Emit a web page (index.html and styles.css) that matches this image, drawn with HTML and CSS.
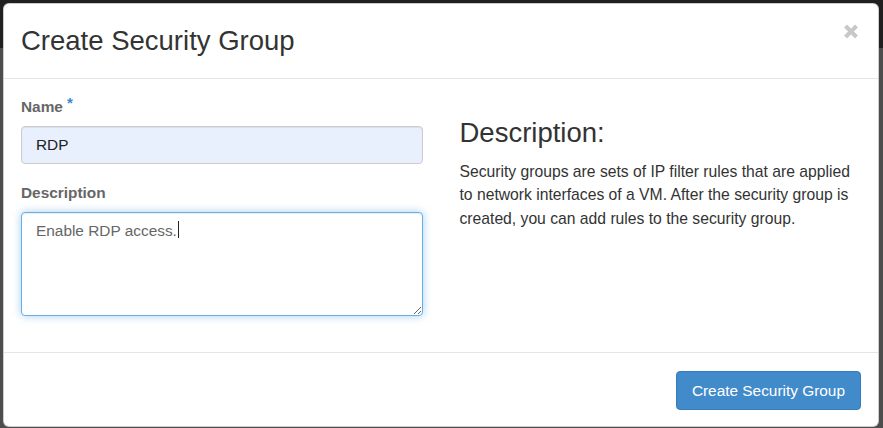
FILE: index.html
```html
<!DOCTYPE html>
<html lang="en">
<head>
<meta charset="utf-8">
<title>Create Security Group</title>
<link rel="stylesheet" href="styles.css">
</head>
<body>
<div class="modal">
  <div class="modal-header">
    <h3 class="modal-title">Create Security Group</h3>
    <button class="close" type="button" aria-label="Close">
      <svg width="16" height="15" viewBox="0 0 16 15"><path d="M2.5 2 L13.5 13 M13.5 2 L2.5 13" stroke="#c8c8c8" stroke-width="4" fill="none"/></svg>
    </button>
  </div>
  <div class="modal-body">
    <div class="form-col">
      <div class="form-group">
        <label class="control-label" for="name">Name<span class="req">*</span></label>
        <input id="name" class="form-control autofilled" type="text" value="RDP">
      </div>
      <div class="form-group">
        <label class="control-label" for="desc">Description</label>
        <div class="textarea-wrap">
          <textarea id="desc" class="form-control focused" rows="4">Enable RDP access.</textarea>
          <span class="caret"></span>
        </div>
      </div>
    </div>
    <div class="help-col">
      <h3 class="help-title">Description:</h3>
      <p class="help-text">Security groups are sets of IP filter rules that are applied to network interfaces of a VM. After the security group is created, you can add rules to the security group.</p>
    </div>
  </div>
  <div class="modal-footer">
    <button class="btn-primary" type="button">Create Security Group</button>
  </div>
</div>
</body>
</html>
```
FILE: styles.css
```css
html, body {
  margin: 0;
  padding: 0;
}
body {
  width: 883px;
  height: 428px;
  overflow: hidden;
  font-family: "Liberation Sans", Arial, sans-serif;
  font-size: 15.4px;
  line-height: 22px;
  color: #333;
  background: linear-gradient(to bottom, #202020 0, #202020 48px, #4d4d4d 48px, #4d4d4d 100%);
}
.modal {
  margin: 3px 4px 0 3px;
  background: #fff;
  border: 1px solid rgba(0, 0, 0, 0.2);
  border-radius: 6px;
  box-sizing: border-box;
}
.modal-header {
  display: flex;
  justify-content: space-between;
  align-items: flex-start;
  padding: 20px 19px 20px 17px;
  border-bottom: 1px solid #e5e5e5;
}
.modal-title {
  margin: 0;
  font-size: 27.5px;
  line-height: 34px;
  font-weight: normal;
  color: #333;
}
.close {
  margin: 0;
  padding: 0;
  border: 0;
  background: transparent;
  width: 16px;
  height: 15px;
  display: block;
}
.close svg {
  display: block;
}
.modal-body {
  display: grid;
  grid-template-columns: 1fr 1fr;
  column-gap: 37px;
  padding: 17px 17px 18px 17px;
}
.form-group {
  margin-bottom: 18px;
}
.control-label {
  display: block;
  font-weight: bold;
  color: #666;
  margin-bottom: 8px;
}
.req {
  color: #3a8ad0;
  margin-left: 4px;
  font-size: 15px;
  position: relative;
  top: -4px;
}
.form-control {
  display: block;
  width: 100%;
  box-sizing: border-box;
  font-family: "Liberation Sans", Arial, sans-serif;
  font-size: 15.4px;
  line-height: 22px;
  color: #555;
  background: #fff;
  border: 1px solid #ccc;
  border-radius: 4px;
  box-shadow: inset 0 1px 1px rgba(0, 0, 0, 0.075);
  margin: 0;
  outline: none;
}
input.form-control {
  height: 38px;
  padding: 7px 14px;
}
.autofilled {
  background: #e8f0fe;
  color: #222;
}
.textarea-wrap {
  position: relative;
}
textarea.form-control {
  height: 104px;
  padding: 7px 14px;
  resize: vertical;
}
.focused {
  border-color: #66afe9;
  box-shadow: inset 0 1px 1px rgba(0, 0, 0, 0.075), 0 0 8px rgba(102, 175, 233, 0.6);
  color: #666;
}
.caret {
  position: absolute;
  left: 157px;
  top: 9px;
  width: 1px;
  height: 17px;
  background: #222;
}
.help-col {
  color: #333;
}
.help-title {
  margin: 22px 0 12px 0;
  font-size: 27.5px;
  line-height: 30px;
  font-weight: normal;
  color: #333;
}
.help-text {
  margin: 0;
  font-size: 15.7px;
  line-height: 23.3px;
  color: #333;
}
.modal-footer {
  display: flex;
  justify-content: flex-end;
  padding: 18px 17px 16px 17px;
  border-top: 1px solid #e5e5e5;
}
.btn-primary {
  height: 39px;
  padding: 0 15px;
  font-family: "Liberation Sans", Arial, sans-serif;
  font-size: 15.4px;
  color: #fff;
  background: #428bca;
  border: 1px solid #357ebd;
  border-radius: 4px;
}
```
